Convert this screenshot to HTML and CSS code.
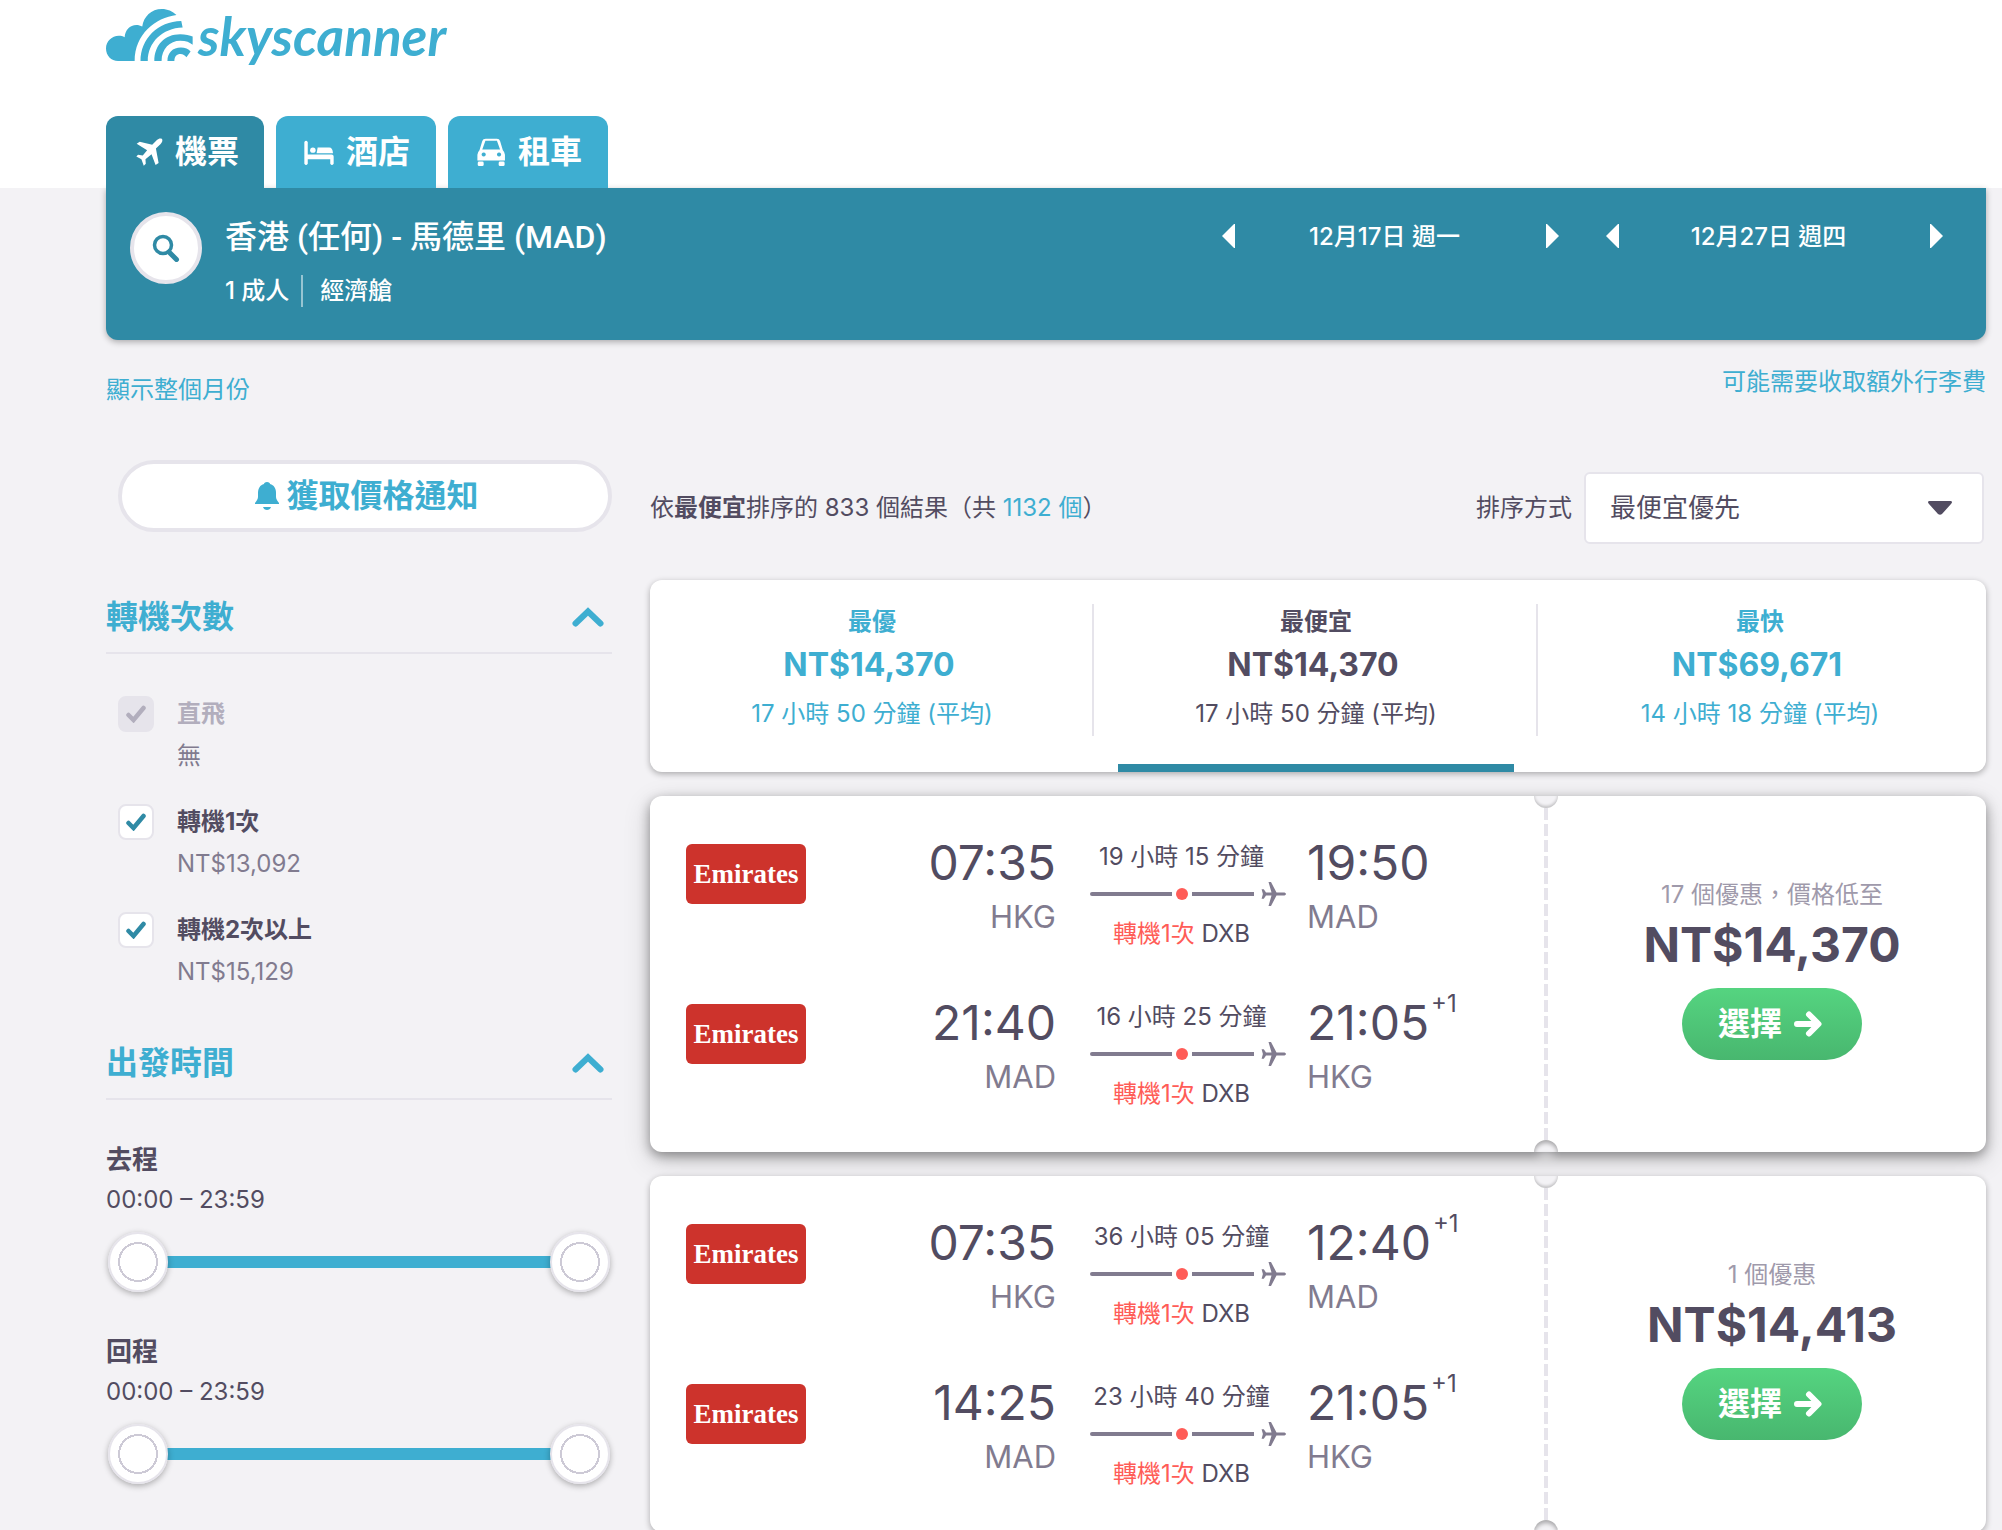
FILE: index.html
```html
<!DOCTYPE html>
<html lang="zh-Hant">
<head>
<meta charset="utf-8">
<meta name="viewport" content="width=device-width, initial-scale=1">
<title>Skyscanner</title>
<link rel="stylesheet" href="styles.css">
</head>
<body>
<svg class="sprite" aria-hidden="true">
  <symbol id="i-plane" viewBox="0 0 25 24"><path d="M25 12c0-.9-1-1.500-2.600-1.500H15.500L10 0H7.500l3 10.500H5L2.800 7.300H.6L1.900 12 .6 16.700h2.200L5 13.500h5.500L7.500 24H10l5.500-10.500h6.900C24 13.500 25 12.900 25 12z"/></symbol>
  <symbol id="i-arrow" viewBox="0 0 28 26"><path d="M3 13h20M15 3.500l9.500 9.500-9.500 9.500" fill="none" stroke="currentColor" stroke-width="6" stroke-linecap="round" stroke-linejoin="round"/></symbol>
  <symbol id="i-up" viewBox="0 0 32 20"><path d="M3.500 16.500L16 4.500l12.500 12" fill="none" stroke="currentColor" stroke-width="6" stroke-linecap="round"/></symbol>
  <symbol id="i-left" viewBox="0 0 13 24"><path d="M13 0v24h-1L0 12 12 0z"/></symbol>
  <symbol id="i-right" viewBox="0 0 13 24"><path d="M0 0h1l12 12L1 24H0z"/></symbol>
</svg>

<header class="header">
  <a class="logo" href="#" aria-label="skyscanner">
    <svg class="logo-mark" viewBox="45 26 252 157" preserveAspectRatio="none" aria-hidden="true">
      <path d="M80 183C60 183 45 166 45 145s17-38 37-38c6 0 12 1 17 4 1-21 15-37 34-37 6 0 12 2 17 5 4-30 26-53 57-53 16 0 31 7 42 18C188 52 128 102 128 183z"/>
      <path d="M145 183c0-68 50-119 118-121l4 20c-59 2-101 45-101 101z"/>
      <path d="M185 183c0-48 30-81 75-81 15 0 28 3 36 7v25c-8-7-19-12-36-12-30 0-54 24-54 61z"/>
      <path d="M223 183c0-25 15-41 39-41 12 0 22 4 28 12l-12 18c-4-6-10-10-17-10-11 0-18 8-18 21z"/>
    </svg>
    <span class="logo-text">skyscanner</span>
  </a>
  <nav class="tabs">
    <a class="tab tab-active" href="#">
      <svg viewBox="135 413 80 83" preserveAspectRatio="none" aria-hidden="true"><path d="M212 416c-4-3-11-1-15 3l-14 14-37-9-9 6 31 19-13 16-14-2-5 5 15 8 7 19 6-6-1-13 18-15 12 32 9-6-8-43 14-13c4-4 7-12 4-15z"/></svg>
      <span>機票</span>
    </a>
    <a class="tab" href="#">
      <svg class="icon-wide" viewBox="624 412 88 83" preserveAspectRatio="none" aria-hidden="true"><path d="M625 424q5-8 10 0v37h70q6 0 6 6v21q-5 8-10 0v-13h-66v13q-5 8-10 0z"/><circle cx="650" cy="448" r="8"/><path d="M664 440h34q10 0 11 17h-48z"/></svg>
      <span>酒店</span>
    </a>
    <a class="tab" href="#">
      <svg class="icon-wide" viewBox="1124 413 86 83" preserveAspectRatio="none" aria-hidden="true"><path fill-rule="evenodd" d="M1152 415h32q7 0 9 7l8 27q6 6 6 14v17h-79v-17q0-8 6-14l8-27q2-7 10-7zM1151 421l-9 26h51l-9-26zM1146 456a6 6 0 1 0 .1 0zM1190 456a6 6 0 1 0 .1 0z"/><rect x="1129" y="483" width="17" height="13" rx="4"/><rect x="1189" y="483" width="17" height="13" rx="4"/></svg>
      <span>租車</span>
    </a>
  </nav>
</header>

<main class="main">
  <section class="search">
    <button class="search-button" type="button" aria-label="搜尋">
      <svg viewBox="0 0 28 28" aria-hidden="true"><circle cx="11" cy="11" r="8.500" fill="none" stroke="currentColor" stroke-width="3.500"/><path d="M17 18l7.500 7.500" stroke="currentColor" stroke-width="5" stroke-linecap="round"/></svg>
    </button>
    <div class="search-info">
      <h1 class="route">香港 (任何) - 馬德里 (MAD)</h1>
      <p class="options"><span>1 成人</span><span class="cabin">經濟艙</span></p>
    </div>
    <div class="dates">
      <div class="date">
        <button type="button" aria-label="前一天"><svg aria-hidden="true"><use href="#i-left"/></svg></button>
        <span>12月17日 週一</span>
        <button type="button" aria-label="後一天"><svg aria-hidden="true"><use href="#i-right"/></svg></button>
      </div>
      <div class="date">
        <button type="button" aria-label="前一天"><svg aria-hidden="true"><use href="#i-left"/></svg></button>
        <span>12月27日 週四</span>
        <button type="button" aria-label="後一天"><svg aria-hidden="true"><use href="#i-right"/></svg></button>
      </div>
    </div>
  </section>

  <div class="links">
    <a class="month-link" href="#">顯示整個月份</a>
    <a href="#">可能需要收取額外行李費</a>
  </div>

  <div class="content">
    <aside class="sidebar">
      <button class="alert-button" type="button">
        <svg viewBox="0 0 24 28" aria-hidden="true"><path d="M12 0c-2 0-3 1-3 2C5 3 3 6.500 3 11v4c0 2-1.500 4-3 6v1h24v-1c-1.500-2-3-4-3-6v-4c0-4.500-2-8-6-9 0-1-1-2-3-2zM8 25h8q-1 3-4 3t-4-3z"/></svg>
        <span>獲取價格通知</span>
      </button>

      <section class="filter">
        <h2 class="filter-title"><span>轉機次數</span><svg aria-hidden="true"><use href="#i-up"/></svg></h2>
        <div class="stops">
          <div class="stop stop-off">
            <input type="checkbox" id="direct" checked disabled>
            <label for="direct">直飛</label>
            <span class="stop-price">無</span>
          </div>
          <div class="stop">
            <input type="checkbox" id="one-stop" checked>
            <label for="one-stop">轉機1次</label>
            <span class="stop-price">NT$13,092</span>
          </div>
          <div class="stop">
            <input type="checkbox" id="two-stops" checked>
            <label for="two-stops">轉機2次以上</label>
            <span class="stop-price">NT$15,129</span>
          </div>
        </div>
      </section>

      <section class="filter">
        <h2 class="filter-title"><span>出發時間</span><svg aria-hidden="true"><use href="#i-up"/></svg></h2>
        <div class="time-filter">
          <h3>去程</h3>
          <p>00:00 – 23:59</p>
          <div class="slider">
            <span class="slider-track"></span>
            <input type="range" min="0" max="1439" value="0" aria-label="去程最早">
            <input type="range" min="0" max="1439" value="1439" aria-label="去程最晚">
          </div>
        </div>
        <div class="time-filter">
          <h3>回程</h3>
          <p>00:00 – 23:59</p>
          <div class="slider">
            <span class="slider-track"></span>
            <input type="range" min="0" max="1439" value="0" aria-label="回程最早">
            <input type="range" min="0" max="1439" value="1439" aria-label="回程最晚">
          </div>
        </div>
      </section>
    </aside>

    <section class="results">
      <div class="results-head">
        <p>依<strong>最便宜</strong>排序的 833 個結果（共 <a href="#">1132 個</a>）</p>
        <div class="sort">
          <label for="sort">排序方式</label>
          <select id="sort"><option>最便宜優先</option><option>最優優先</option><option>最快優先</option></select>
        </div>
      </div>

      <div class="summary">
        <button class="summary-tab" type="button"><b>最優</b><strong>NT$14,370</strong><span>17 小時 50 分鐘 (平均)</span></button>
        <button class="summary-tab summary-active" type="button"><b>最便宜</b><strong>NT$14,370</strong><span>17 小時 50 分鐘 (平均)</span></button>
        <button class="summary-tab" type="button"><b>最快</b><strong>NT$69,671</strong><span>14 小時 18 分鐘 (平均)</span></button>
      </div>

      <article class="ticket ticket-raised">
        <div class="legs">
          <div class="leg">
            <span class="airline">Emirates</span>
            <div class="depart"><span class="time">07:35</span><span class="airport">HKG</span></div>
            <div class="path">
              <span>19 小時 15 分鐘</span>
              <div class="line"><i class="seg"></i><i class="dot"></i><i class="seg seg-end"></i><svg aria-hidden="true"><use href="#i-plane"/></svg></div>
              <span><em>轉機1次</em> DXB</span>
            </div>
            <div class="arrive"><span class="time">19:50</span><span class="airport">MAD</span></div>
          </div>
          <div class="leg">
            <span class="airline">Emirates</span>
            <div class="depart"><span class="time">21:40</span><span class="airport">MAD</span></div>
            <div class="path">
              <span>16 小時 25 分鐘</span>
              <div class="line"><i class="seg"></i><i class="dot"></i><i class="seg seg-end"></i><svg aria-hidden="true"><use href="#i-plane"/></svg></div>
              <span><em>轉機1次</em> DXB</span>
            </div>
            <div class="arrive"><span class="time">21:05<sup>+1</sup></span><span class="airport">HKG</span></div>
          </div>
        </div>
        <div class="tear"></div>
        <div class="stub">
          <span class="deals">17 個優惠，價格低至</span>
          <strong class="price">NT$14,370</strong>
          <button class="select-button" type="button"><span>選擇</span><svg aria-hidden="true"><use href="#i-arrow"/></svg></button>
        </div>
      </article>

      <article class="ticket">
        <div class="legs">
          <div class="leg">
            <span class="airline">Emirates</span>
            <div class="depart"><span class="time">07:35</span><span class="airport">HKG</span></div>
            <div class="path">
              <span>36 小時 05 分鐘</span>
              <div class="line"><i class="seg"></i><i class="dot"></i><i class="seg seg-end"></i><svg aria-hidden="true"><use href="#i-plane"/></svg></div>
              <span><em>轉機1次</em> DXB</span>
            </div>
            <div class="arrive"><span class="time">12:40<sup>+1</sup></span><span class="airport">MAD</span></div>
          </div>
          <div class="leg">
            <span class="airline">Emirates</span>
            <div class="depart"><span class="time">14:25</span><span class="airport">MAD</span></div>
            <div class="path">
              <span>23 小時 40 分鐘</span>
              <div class="line"><i class="seg"></i><i class="dot"></i><i class="seg seg-end"></i><svg aria-hidden="true"><use href="#i-plane"/></svg></div>
              <span><em>轉機1次</em> DXB</span>
            </div>
            <div class="arrive"><span class="time">21:05<sup>+1</sup></span><span class="airport">HKG</span></div>
          </div>
        </div>
        <div class="tear"></div>
        <div class="stub">
          <span class="deals">1 個優惠</span>
          <strong class="price">NT$14,413</strong>
          <button class="select-button" type="button"><span>選擇</span><svg aria-hidden="true"><use href="#i-arrow"/></svg></button>
        </div>
      </article>
    </section>
  </div>
</main>
</body>
</html>
```
FILE: styles.css
```css
:root {
  --blue: #3eaed1;
  --teal: #2f8aa5;
  --ink: #524c61;
  --grey: #817b8f;
  --line: #e6e4eb;
  --page: #f3f2f5;
}

* { box-sizing: border-box; }

body {
  margin: 0;
  background: var(--page);
  color: var(--ink);
  font-family: Inter, "Noto Sans CJK TC", sans-serif;
  font-size: 24px;
  line-height: 32px;
}

h1, h2, h3, p { margin: 0; font-size: inherit; }
button, select, input { margin: 0; font: inherit; color: inherit; }
button { border: 0; padding: 0; background: none; cursor: pointer; }
a { color: var(--blue); text-decoration: none; }
svg { display: block; flex: none; fill: currentColor; }
.sprite { display: none; }

/* Header */
.header {
  display: flex;
  flex-direction: column;
  gap: 40px;
  padding: 0 16px 0 106px;
  background: #fff;
}
.logo { display: flex; align-items: flex-start; gap: 5px; height: 76px; padding-top: 9px; }
.logo-mark { width: 87px; height: 52px; }
.logo-text {
  font: italic 700 53px/54px Lato, sans-serif;
}
.tabs { display: flex; gap: 12px; }
.tab {
  display: flex;
  align-items: center;
  gap: 12px;
  height: 72px;
  padding: 0 26px 0 28px;
  border-radius: 12px 12px 0 0;
  background: var(--blue);
  color: #fff;
  font-size: 32px;
  font-weight: 700;
}
.tab svg { width: 27px; height: 28px; }
.tab .icon-wide { width: 30px; }
.tab-active { padding: 0 25px 0 30px; background: var(--teal); }

/* Search summary */
.main { padding: 0 16px 0 106px; }
.search {
  display: flex;
  align-items: flex-start;
  min-height: 152px;
  padding: 24px 43px 24px 24px;
  border-radius: 0 0 12px 12px;
  background: var(--teal);
  color: #fff;
  box-shadow: 0 2px 6px rgba(0, 0, 0, .3);
}
.search-button {
  display: grid;
  place-items: center;
  width: 72px;
  height: 72px;
  margin-right: 23px;
  border: 4px solid var(--line);
  border-radius: 50%;
  background: #fff;
  color: var(--teal);
}
.search-button svg { width: 28px; height: 28px; }
.search-info { flex: 1; padding-top: 5px; }
.route {
  font-family: Roboto, "Noto Sans CJK TC", sans-serif;
  font-size: 32px;
  line-height: 40px;
  font-weight: 500;
}
.options { display: flex; gap: 12px; margin-top: 18px; font-weight: 500; }
.cabin { padding-left: 17px; border-left: 2px solid rgba(255, 255, 255, .5); }
.dates { display: flex; gap: 47px; padding-top: 12px; }
.date {
  display: flex;
  align-items: center;
  justify-content: space-between;
  width: 337px;
  height: 24px;
  font-weight: 500;
}
.date span { padding: 2px 12px 0 0; }
.date svg { width: 13px; height: 24px; }

.links {
  display: flex;
  justify-content: space-between;
  align-items: flex-start;
  padding: 26px 0 54px;
}
.month-link { padding-top: 8px; }

/* Two columns */
.content {
  display: grid;
  grid-template-columns: 506px minmax(0, 1fr);
  gap: 38px;
}

/* Sidebar */
.sidebar { display: flex; flex-direction: column; }
.alert-button {
  display: flex;
  align-items: center;
  justify-content: center;
  gap: 7px;
  height: 72px;
  margin: 0 0 65px 12px;
  padding-left: 4px;
  border: 4px solid var(--line);
  border-radius: 36px;
  background: #fff;
  color: var(--blue);
  font-size: 32px;
  font-weight: 700;
}
.alert-button svg { width: 24px; height: 28px; }
.filter-title {
  display: flex;
  align-items: center;
  justify-content: space-between;
  padding: 0 8px 15px 0;
  border-bottom: 2px solid var(--line);
  color: var(--blue);
  font-size: 32px;
  line-height: 40px;
}
.filter-title svg { width: 32px; height: 20px; }
.stops { display: grid; gap: 30px; padding: 42px 12px 53px; }
.stop {
  display: grid;
  grid-template-columns: 36px 1fr;
  gap: 6px 23px;
  line-height: 36px;
}
.stop input {
  appearance: none;
  width: 36px;
  height: 36px;
  border: 2px solid var(--line);
  border-radius: 8px;
  background: #fff url("data:image/svg+xml,%3Csvg xmlns='http://www.w3.org/2000/svg' width='20' height='18' viewBox='0 0 20 18'%3E%3Cpath d='M2.500 10l5 5L17.500 3' fill='none' stroke='%232f8aa5' stroke-width='4.500' stroke-linecap='round'/%3E%3C/svg%3E") center no-repeat;
}
.stop input:disabled {
  background: var(--line) url("data:image/svg+xml,%3Csvg xmlns='http://www.w3.org/2000/svg' width='20' height='18' viewBox='0 0 20 18'%3E%3Cpath d='M2.500 10l5 5L17.500 3' fill='none' stroke='%23b2aebd' stroke-width='4.500' stroke-linecap='round'/%3E%3C/svg%3E") center no-repeat;
}
.stop label { font-weight: 700; }
.stop-off label { color: #b2aebd; }
.stop-price { grid-column: 2; color: var(--grey); }
.time-filter { padding-top: 40px; font-size: 26px; line-height: 40px; }
.time-filter p { font-size: 24px; }
.slider {
  display: grid;
  align-items: center;
  height: 60px;
  margin: 12px 2px 0;
}
.slider > * { grid-area: 1 / 1; }
.slider-track { height: 12px; margin: 0 30px; background: var(--blue); }
.slider input {
  appearance: none;
  width: 100%;
  height: 60px;
  background: none;
  pointer-events: none;
}
.slider input::-webkit-slider-thumb {
  appearance: none;
  width: 60px;
  height: 60px;
  border: 2px solid var(--line);
  border-radius: 50%;
  background: radial-gradient(circle, #fff 18px, #cdcad6 18px 20px, #fff 20px);
  box-shadow: 0 2px 6px rgba(0, 0, 0, .3);
  pointer-events: auto;
}

/* Results */
.results { display: flex; flex-direction: column; gap: 24px; }
.results-head {
  display: flex;
  align-items: center;
  justify-content: space-between;
  padding: 12px 2px 12px 0;
}
.sort { display: flex; align-items: center; gap: 12px; }
.sort select {
  appearance: none;
  width: 400px;
  height: 72px;
  padding: 0 60px 0 24px;
  border: 2px solid var(--line);
  border-radius: 6px;
  background: #fff url("data:image/svg+xml,%3Csvg xmlns='http://www.w3.org/2000/svg' width='24' height='14' viewBox='0 0 24 14'%3E%3Cpath d='M1 0h22q2 1 0 3L14 13q-2 1.500-4 0L1 3q-2-2 0-3z' fill='%23524c61'/%3E%3C/svg%3E") right 30px center no-repeat;
  font-size: 26px;
}
.summary {
  display: grid;
  grid-template-columns: repeat(3, 1fr);
  min-height: 192px;
  padding-right: 4px;
  border-radius: 12px;
  background: #fff;
  box-shadow: 0 2px 6px rgba(0, 0, 0, .3);
}
.summary-tab {
  display: grid;
  grid-template-rows: 36px 48px 48px 1fr;
  justify-items: center;
  padding-top: 24px;
  background: linear-gradient(var(--line), var(--line)) right 24px / 2px 132px no-repeat;
  color: var(--blue);
}
.summary-tab:last-child { background: none; }
.summary-tab b { line-height: 36px; }
.summary-tab strong { padding-right: 6px; font-size: 32px; line-height: 50px; }
.summary-tab span { line-height: 52px; }
.summary-active { color: var(--ink); }
.summary-active::after {
  content: "";
  align-self: end;
  width: calc(100% - 48px);
  height: 8px;
  background: var(--teal);
}

.ticket {
  display: flex;
  min-height: 356px;
  border-radius: 12px;
  background: #fff;
  box-shadow: 0 2px 6px rgba(0, 0, 0, .3);
}
.ticket-raised { box-shadow: 0 4px 12px rgba(0, 0, 0, .38), 0 8px 28px rgba(0, 0, 0, .16); }
.legs {
  display: grid;
  flex: 1;
  gap: 44px;
  padding: 38px 0 42px 36px;
}
.leg {
  display: grid;
  grid-template-columns: 120px 1fr 196px 248px;
  align-items: start;
}
.airline {
  height: 60px;
  margin-top: 10px;
  border-radius: 6px;
  background: #cd332c;
  color: #fff;
  font: 700 27px/60px "Liberation Serif", serif;
  text-align: center;
}
.time, .airport { display: block; }
.time { font-size: 48px; line-height: 58px; }
.airport { color: var(--grey); font-size: 31px; line-height: 50px; }
.depart { padding-right: 34px; text-align: right; }
.arrive { padding-left: 21px; }
sup {
  margin-left: 2px;
  font-size: 24px;
  line-height: 0;
  vertical-align: 28px;
}
.path { padding-top: 7px; text-align: center; }
.path > span { display: block; padding-right: 13px; }
.path em { color: #ff5c57; font-style: normal; }
.line { display: flex; align-items: center; height: 24px; margin: 9px 0 12px; }
.seg { flex: 1; height: 4px; border-radius: 2px 0 0 2px; background: var(--grey); }
.seg-end { flex: 0 0 62px; margin-right: 7px; border-radius: 0; }
.dot { width: 12px; height: 12px; margin: 0 4px; border-radius: 50%; background: #ff5c57; }
.line svg { width: 25px; height: 24px; color: var(--grey); }

/* Perforated edge with a notch at each end */
.tear {
  display: flex;
  flex-direction: column;
  justify-content: space-between;
  width: 24px;
  background: repeating-linear-gradient(var(--line) 0 8px, transparent 8px 12px, var(--line) 12px 16px) center / 4px 100% no-repeat;
}
.tear::before, .tear::after {
  content: "";
  height: 12px;
  background: var(--page);
}
.tear::before {
  border-radius: 0 0 12px 12px;
  box-shadow: inset 0 -2px 3px rgba(0, 0, 0, .2);
}
.tear::after {
  border-radius: 12px 12px 0 0;
  box-shadow: inset 0 3px 4px rgba(0, 0, 0, .3), 0 10px 8px -4px var(--page);
}

.stub {
  display: flex;
  flex-direction: column;
  align-items: center;
  width: 428px;
  padding-top: 83px;
}
.deals { color: #9f9aab; }
.price { margin: 6px 0 15px; font-size: 48px; line-height: 56px; }
.select-button {
  display: flex;
  align-items: center;
  justify-content: center;
  gap: 12px;
  width: 180px;
  height: 72px;
  padding-right: 4px;
  border-radius: 36px;
  background: linear-gradient(#55d480, #48b76f);
  color: #fff;
  font-size: 32px;
  font-weight: 700;
}
.select-button svg { width: 28px; height: 26px; }
```
